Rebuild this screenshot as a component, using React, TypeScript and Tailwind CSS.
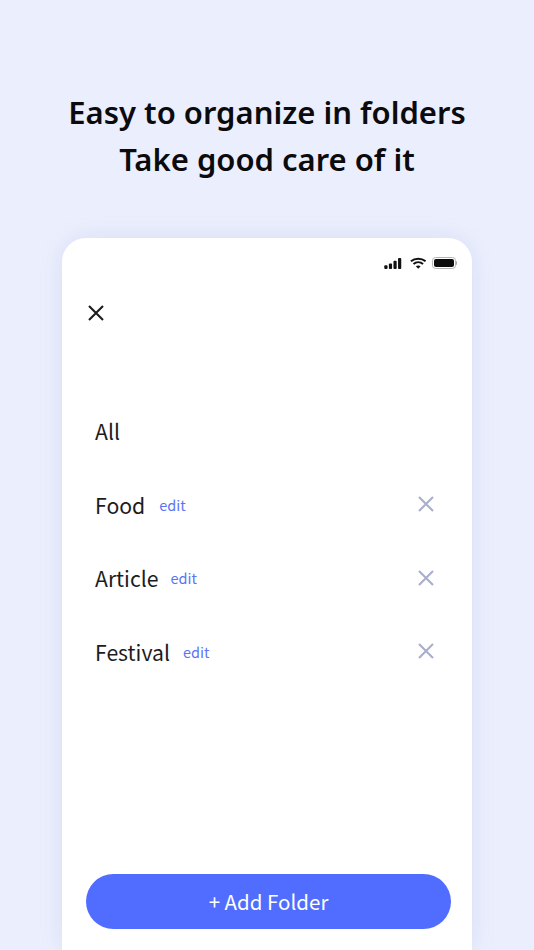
function Cross({ className }: { className: string }) {
  return (
    <svg viewBox="0 0 16 16" className={className} fill="none" stroke="currentColor" strokeWidth="2.1">
      <path d="M1 1 15 15M15 1 1 15" />
    </svg>
  );
}

function Row({ name, gap }: { name: string; gap: string }) {
  return (
    <div className="flex h-[73.7px] items-center pr-[38px]">
      <span className="text-[21.2px] leading-[32px] text-[#1c1c1e]">{name}</span>
      <span className={`${gap} text-[14.5px] leading-[24px] text-[#5a75f5]`}>edit</span>
      <Cross className="mt-[-1px] ml-auto h-[16px] w-[16px] text-[#a9aecb]" />
    </div>
  );
}

export default function App() {
  return (
    <div className="flex h-[950px] w-[534px] flex-col items-center overflow-hidden bg-[#ebeffd] font-['Noto_Sans_CJK_KR',sans-serif]">
      <h1 className="mt-[89px] text-center font-['Noto_Sans',sans-serif] text-[31px] leading-[47px] font-semibold text-[#0b0b0e]">
        Easy to organize in folders
        <br />
        Take good care of it
      </h1>
      <div className="mt-[55px] flex h-[740px] w-[410px] flex-col rounded-t-[24px] bg-white pb-[21px] pl-[33px] shadow-[0_0_24px_rgba(80,95,190,0.12)]">
        <div className="mt-[19px] mr-[15.5px] flex items-center justify-end">
          <svg viewBox="0 0 19 12" className="h-[11px] w-[18px] text-[#111]" fill="currentColor">
            <rect x="0" y="8" width="3.5" height="4" rx="1" />
            <rect x="5" y="6" width="3.5" height="6" rx="1" />
            <rect x="10" y="3" width="3.5" height="9" rx="1" />
            <rect x="15" y="0" width="3.5" height="12" rx="1" />
          </svg>
          <svg viewBox="0 0 18 13" className="ml-[8px] h-[12px] w-[16.5px] text-[#111]" fill="none" stroke="currentColor" strokeWidth="2.2">
            <path d="M1 4.6C5.500.8 12.500.8 17 4.600" />
            <path d="M3.800 7.500c3-2.500 7.400-2.500 10.400 0" />
            <path d="M9 12.800 6.400 10c1.500-1.200 3.700-1.200 5.200 0Z" fill="currentColor" stroke="none" />
          </svg>
          <div className="ml-[5.5px] flex items-center">
            <div className="h-[11.5px] w-[24px] rounded-[3.500px] border border-[#b5b5b5] p-[1px]">
              <div className="h-full w-full rounded-[2px] bg-[#0c0c0c]" />
            </div>
            <div className="h-[4px] w-[1px] rounded-r bg-[#a8a8a8]" />
          </div>
        </div>
        <Cross className="mt-[36px] ml-[-7.500px] h-[16px] w-[16px] text-[#1c1c1e]" />
        <div className="mt-[73px] flex h-[73.7px] items-center">
          <span className="text-[21.2px] leading-[32px] text-[#1c1c1e]">All</span>
        </div>
        <Row name="Food" gap="ml-[14px]" />
        <Row name="Article" gap="ml-[12px]" />
        <Row name="Festival" gap="ml-[13px]" />
        <button className="mt-auto ml-[-9px] flex h-[55px] w-[365px] items-center justify-center rounded-full bg-[#506dff] text-[20.5px] text-white">
          + Add Folder
        </button>
      </div>
    </div>
  );
}
